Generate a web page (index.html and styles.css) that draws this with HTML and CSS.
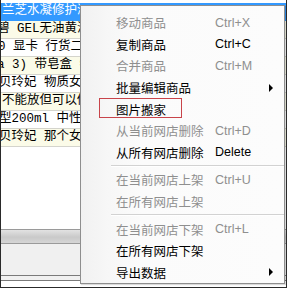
FILE: index.html
```html
<!DOCTYPE html>
<html lang="zh">
<head>
<meta charset="utf-8">
<link rel="stylesheet" href="styles.css">
</head>
<body>
<div class="frame">
  <div class="grid">
    <div class="row sel"><span class="cell t1">兰芝水凝修护液洗面乳</span></div>
    <div class="row alt"><span class="cell t2">碧 GEL无油黄油保湿霜</span></div>
    <div class="row"><span class="cell t3">0 显卡 行货二年质保</span></div>
    <div class="row alt"><span class="cell t4">a 3) 带皂盒 特价促销</span></div>
    <div class="row"><span class="cell t5">贝玲妃 物质女孩腮红</span></div>
    <div class="row alt"><span class="cell t6">不能放但可以做的事</span></div>
    <div class="row"><span class="cell t7">型200ml 中性/油性</span></div>
    <div class="row alt"><span class="cell t8">贝玲妃 那个女孩胭脂</span></div>
  </div>
  <div class="filler"></div>
  <div class="hbar"></div>
  <div class="panel"></div>
  <div class="foot"></div>

  <div class="menu">
    <div class="item off"><span class="label">移动商品</span><span class="key">Ctrl+X</span></div>
    <div class="item"><span class="label">复制商品</span><span class="key">Ctrl+C</span></div>
    <div class="item off"><span class="label">合并商品</span><span class="key">Ctrl+M</span></div>
    <div class="item"><span class="label">批量编辑商品</span><span class="arrow"></span></div>
    <div class="item marked"><span class="label">图片搬家</span><span class="mark"></span></div>
    <div class="item off"><span class="label">从当前网店删除</span><span class="key">Ctrl+D</span></div>
    <div class="item"><span class="label">从所有网店删除</span><span class="key">Delete</span></div>
    <div class="sep"></div>
    <div class="item off"><span class="label">在当前网店上架</span><span class="key">Ctrl+U</span></div>
    <div class="item off"><span class="label">在所有网店上架</span></div>
    <div class="sep"></div>
    <div class="item off"><span class="label">在当前网店下架</span><span class="key">Ctrl+L</span></div>
    <div class="item"><span class="label">在所有网店下架</span></div>
    <div class="item"><span class="label">导出数据</span><span class="arrow"></span></div>
  </div>
</div>
</body>
</html>
```

FILE: styles.css
```css
html, body {
  margin: 0;
  padding: 0;
  background: #ffffff;
}

.frame {
  position: relative;
  width: 287px;
  height: 288px;
  box-sizing: border-box;
  border: 1px solid #2a2a2a;
  border-top: none;
  padding-top: 3px;
  display: flex;
  flex-direction: column;
  overflow: hidden;
  background: #ffffff;
}

.grid {
  display: flex;
  flex-direction: column;
}

.row {
  height: 18px;
  box-sizing: border-box;
  line-height: 17px;
  border-bottom: 1px solid #d4d4cc;
  font-family: "Liberation Mono", "Noto Sans CJK SC", monospace;
  font-size: 12.5px;
  color: #000000;
  white-space: nowrap;
  background: #ffffff;
}

.cell {
  display: block;
  width: 79px;
  overflow: hidden;
  white-space: nowrap;
}

.row.alt {
  background: #fbfbe8;
}

.row.sel {
  background: #3399ff;
  color: #ffffff;
  border-bottom-color: #3399ff;
}

.t1 { text-indent: 1px; }
.t2 { text-indent: -4px; }
.t3 { text-indent: -3px; }
.t4 { text-indent: -4px; }
.t5 { text-indent: -2px; }
.t6 { text-indent: 1px; }
.t7 { text-indent: -2px; }
.t8 { text-indent: -2px; }

.filler {
  flex: 1;
  background: #ffffff;
}

.hbar {
  height: 15px;
  box-sizing: border-box;
  border-top: 1px solid #9a9a9a;
  border-bottom: 1px solid #9a9a9a;
  background: linear-gradient(#e2e2e2, #c9c9c9 55%, #d6d6d6);
}

.panel {
  height: 31px;
  background: #f0f0f0;
}

.foot {
  height: 12px;
  box-sizing: border-box;
  border-top: 1px solid #7a7a7a;
  background: linear-gradient(#f0f0f0 0 4px, #7a7a7a 4px 5px, #ffffff 5px);
}

/* context menu overlay */
.menu {
  position: absolute;
  left: 79px;
  top: 5px;
  width: 205px;
  height: 279px;
  box-sizing: border-box;
  border: 1px solid #8e8e8e;
  padding-top: 6px;
  background: linear-gradient(90deg, #f1f1f1 0, #f7f7f7 28px, #fbfbfb 60px, #fcfcfc 100%);
  box-shadow: 1px 1px 1px rgba(0, 0, 0, 0.15);
  font-family: "Liberation Sans", "Noto Sans CJK SC", sans-serif;
  font-size: 12.5px;
  color: #000000;
}

.item {
  position: relative;
  height: 21.6px;
  display: flex;
  align-items: center;
  padding-left: 35px;
  padding-right: 11px;
}

.item.off {
  color: #8f8f8f;
}

.label {
  width: 99px;
  flex: none;
  white-space: nowrap;
}

.key {
  white-space: nowrap;
}

.arrow {
  margin-left: auto;
  width: 0;
  height: 0;
  border-left: 4px solid #000000;
  border-top: 4px solid transparent;
  border-bottom: 4px solid transparent;
}

.mark {
  position: absolute;
  left: 18px;
  top: 0;
  width: 83px;
  height: 20px;
  box-sizing: border-box;
  border: 1px solid #c8444a;
}

.sep {
  height: 6px;
  box-sizing: border-box;
  margin-left: 30px;
  padding-top: 2px;
}

.sep::after {
  content: "";
  display: block;
  height: 1px;
  background: #d2d2d2;
  border-bottom: 1px solid #ffffff;
}
```
